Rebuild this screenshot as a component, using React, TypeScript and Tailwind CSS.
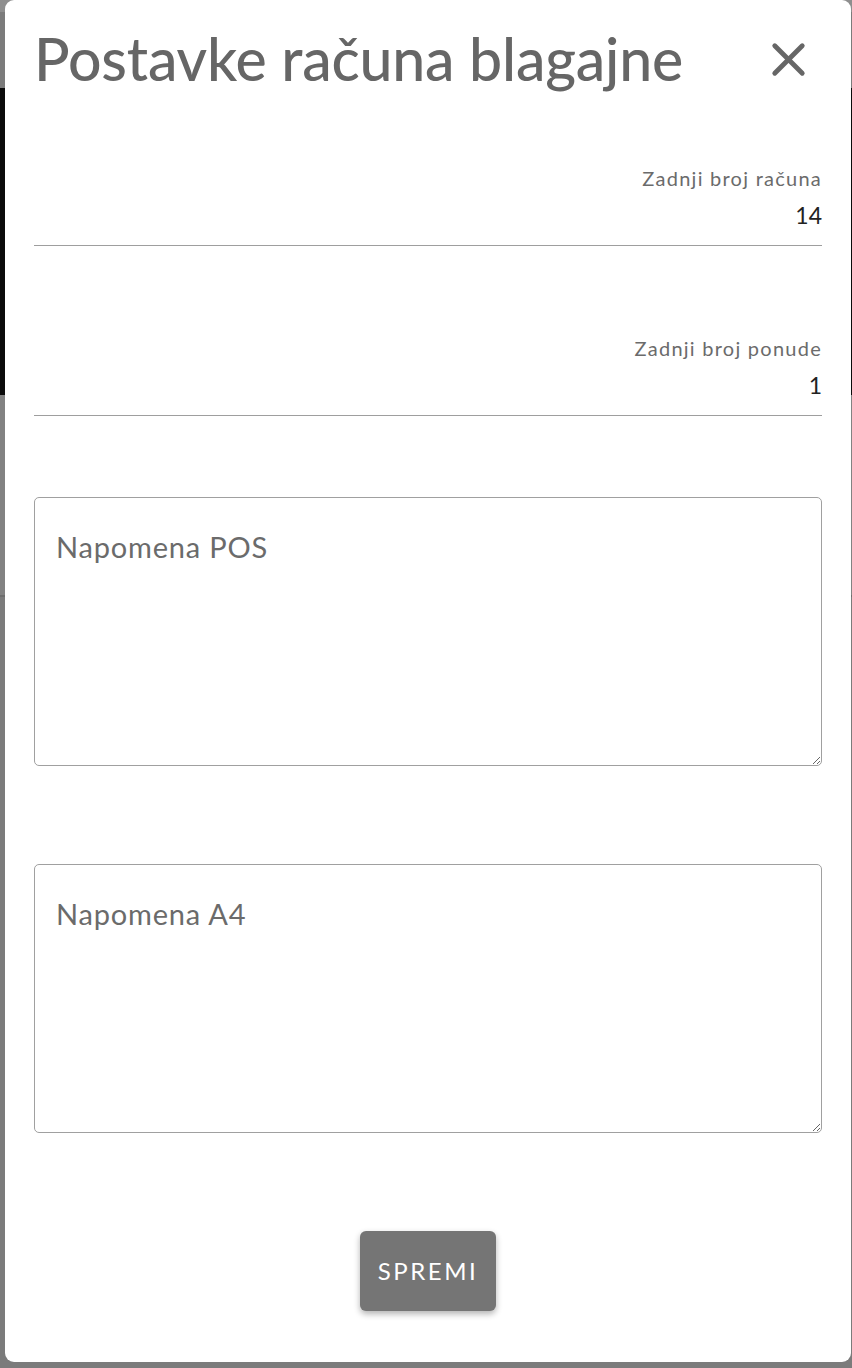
import { X } from 'lucide-react';

const FONT = { fontFamily: 'Lato, "Open Sans", sans-serif' };

function NumberField({ label, value }: { label: string; value: string }) {
  return (
    <div className="flex flex-col items-end border-b border-[#9e9e9e]">
      <label className="text-[20px] leading-[24px] tracking-[1.25px] text-[#6b6b6b]">{label}</label>
      <div className="mt-[12px] mb-[17px] text-[23px] leading-[26px] text-[#222]">{value}</div>
    </div>
  );
}

function NoteArea({ placeholder }: { placeholder: string }) {
  return (
    <textarea
      placeholder={placeholder}
      className="h-[269px] w-full resize-y rounded-[5px] border border-[#a0a0a0] px-[21px] pt-[31px] text-[29px] leading-[35px] tracking-[0.8px] text-[#333] outline-none placeholder:text-[#6b6b6b]"
      style={FONT}
    />
  );
}

export default function App() {
  return (
    <div className="relative h-[1368px] w-[852px] overflow-hidden bg-[#7b7b7b]" style={FONT}>
      {/* dimmed page behind the dialog */}
      <div className="h-[12px] bg-[#8e8e8e]" />
      <div className="h-[76px]" />
      <div className="h-[307px] bg-[#0b0b0b]" />
      <div className="h-[200px] bg-[#828282]" />
      <div className="h-[2px] bg-[#6e6e6e]" />

      <div className="absolute left-[5px] top-0 flex h-[1362px] w-[846px] flex-col rounded-[9px] bg-white px-[29px]">
        <div className="flex items-start justify-between pt-[24px]">
          <h1 className="text-[59px] font-medium leading-[70px] tracking-[-0.2px] text-[#666]">
            Postavke računa blagajne
          </h1>
          <button className="mr-[6px] mt-[8px] text-[#666]">
            <X size={55} strokeWidth={2.1} />
          </button>
        </div>

        <div className="mt-[72px]">
          <NumberField label="Zadnji broj računa" value="14" />
        </div>
        <div className="mt-[90px]">
          <NumberField label="Zadnji broj ponude" value="1" />
        </div>

        <div className="mt-[81px]">
          <NoteArea placeholder="Napomena POS" />
        </div>
        <div className="mt-[92px]">
          <NoteArea placeholder="Napomena A4" />
        </div>

        <div className="mt-[92px] flex justify-center">
          <button className="h-[80px] w-[136px] rounded-[6px] bg-[#757575] text-[24px] tracking-[2.5px] text-white shadow-[0_3px_6px_rgba(0,0,0,0.3)]">
            SPREMI
          </button>
        </div>
      </div>
    </div>
  );
}
